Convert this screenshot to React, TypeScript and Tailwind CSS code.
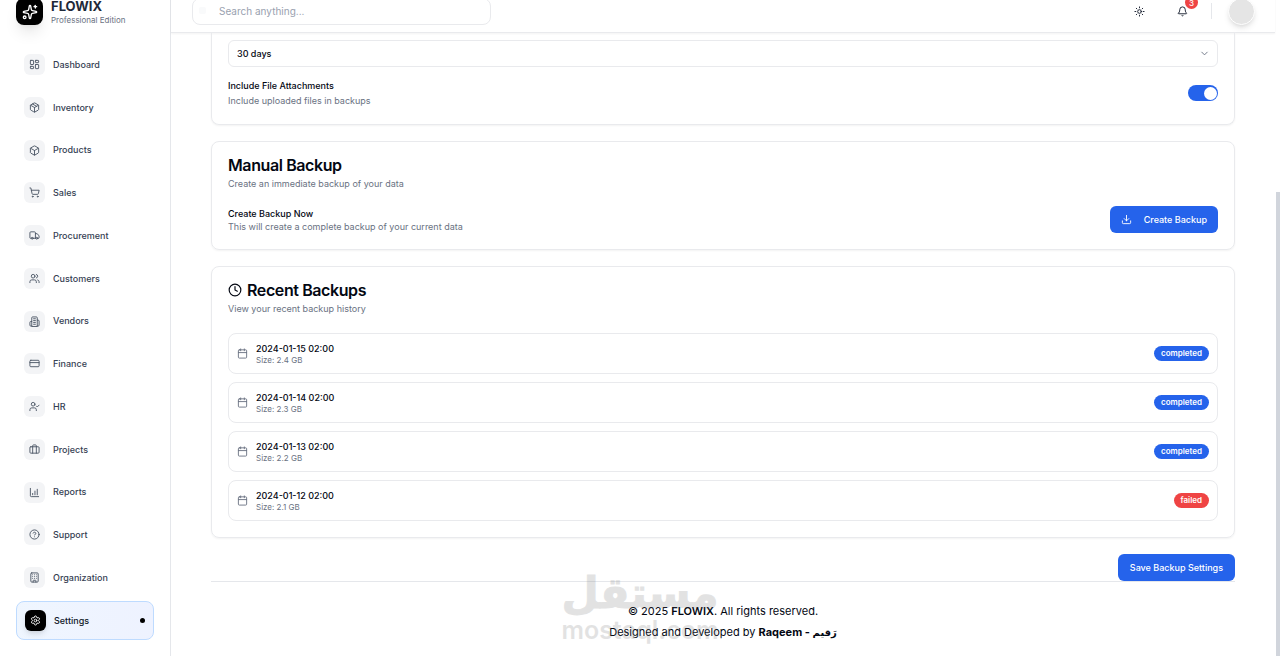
import React from "react";
import {
  Bell,
  Box,
  Building,
  Calendar,
  ChevronDown,
  CircleQuestionMark,
  Clock,
  CreditCard,
  LayoutDashboard,
  Package,
  Settings,
  ShoppingCart,
  Sparkles,
  Sun,
  Truck,
  UserCheck,
  Users,
  type LucideIcon,
} from "lucide-react";

function ReportIcon({ className }: { className?: string }) {
  return (
    <svg className={className} viewBox="0 0 24 24" fill="none" stroke="currentColor" strokeWidth="2" strokeLinecap="round" strokeLinejoin="round">
      <path d="M3 3v16a2 2 0 0 0 2 2h16" />
      <path d="M8 17v-3M13 17V9M18 17V5" />
    </svg>
  );
}

function VendorIcon({ className }: { className?: string }) {
  return (
    <svg className={className} viewBox="0 0 24 24" fill="none" stroke="currentColor" strokeWidth="2" strokeLinecap="round" strokeLinejoin="round">
      <path d="M6 22V4a2 2 0 0 1 2-2h8a2 2 0 0 1 2 2v18Z" />
      <path d="M6 12H4a2 2 0 0 0-2 2v6a2 2 0 0 0 2 2h2" />
      <path d="M18 9h2a2 2 0 0 1 2 2v9a2 2 0 0 1-2 2h-2" />
      <path d="M10 6h4M10 10h4M10 14h4M10 18h4" />
    </svg>
  );
}

function ProjectIcon({ className }: { className?: string }) {
  return (
    <svg className={className} viewBox="0 0 24 24" fill="none" stroke="currentColor" strokeWidth="2" strokeLinecap="round" strokeLinejoin="round">
      <path d="M16 20V4a2 2 0 0 0-2-2h-4a2 2 0 0 0-2 2v16" />
      <rect width="20" height="14" x="2" y="6" rx="2" />
    </svg>
  );
}

function BackupIcon({ className }: { className?: string }) {
  return (
    <svg className={className} viewBox="0 0 24 24" fill="none" stroke="currentColor" strokeWidth="2" strokeLinecap="round" strokeLinejoin="round">
      <path d="M21 15v4a2 2 0 0 1-2 2H5a2 2 0 0 1-2-2v-4" />
      <path d="M7 10l5 5 5-5M12 15V3" />
    </svg>
  );
}

type IconType = LucideIcon | ((p: { className?: string }) => React.ReactElement);

const navItems: { label: string; icon: IconType }[] = [
  { label: "Dashboard", icon: LayoutDashboard },
  { label: "Inventory", icon: Package },
  { label: "Products", icon: Box },
  { label: "Sales", icon: ShoppingCart },
  { label: "Procurement", icon: Truck },
  { label: "Customers", icon: Users },
  { label: "Vendors", icon: VendorIcon },
  { label: "Finance", icon: CreditCard },
  { label: "HR", icon: UserCheck },
  { label: "Projects", icon: ProjectIcon },
  { label: "Reports", icon: ReportIcon },
  { label: "Support", icon: CircleQuestionMark },
  { label: "Organization", icon: Building },
];

const backups = [
  { date: "2024-01-15 02:00", size: "2.4 GB", status: "completed" },
  { date: "2024-01-14 02:00", size: "2.3 GB", status: "completed" },
  { date: "2024-01-13 02:00", size: "2.2 GB", status: "completed" },
  { date: "2024-01-12 02:00", size: "2.1 GB", status: "failed" },
];

function Sidebar() {
  return (
    <aside className="flex w-[171px] shrink-0 flex-col border-r border-gray-200 px-4 pb-4">
      <div className="-mt-[2px] flex h-[27px] shrink-0 items-center gap-2">
        <div className="flex size-[27px] shrink-0 items-center justify-center rounded-lg bg-black text-white shadow-lg">
          <Sparkles className="size-4" />
        </div>
        <div>
          <div className="text-[13px] leading-4 font-bold text-gray-800">FLOWIX</div>
          <div className="text-[8px] leading-3 text-gray-500">Professional Edition</div>
        </div>
      </div>
      <nav aria-label="Main" className="mt-5 flex flex-1 flex-col justify-between">
        {navItems.map(({ label, icon: Icon }) => (
          <a key={label} href="#" className="flex h-[39px] items-center gap-2 px-2 text-[9px] font-medium text-gray-700">
            <span className="flex size-[21px] items-center justify-center rounded-md bg-gray-100 text-gray-600">
              <Icon className="size-[11px]" />
            </span>
            {label}
          </a>
        ))}
        <a
          href="#"
          aria-current="page"
          className="flex h-[39px] items-center gap-2 rounded-lg border border-blue-200 bg-linear-to-r from-blue-50 to-indigo-50 px-2 text-[9px] font-medium text-gray-900"
        >
          <span className="flex size-[21px] items-center justify-center rounded-md bg-black text-white shadow-md">
            <Settings className="size-[11px]" />
          </span>
          <span className="flex-1">Settings</span>
          <span className="size-[5px] rounded-full bg-black" />
        </a>
      </nav>
    </aside>
  );
}

function Header() {
  return (
    <header className="-mt-[10px] flex h-[43px] shrink-0 items-center justify-between border-b border-[#e9eaed] pr-5 pl-[21px] shadow-xs">
      <div className="relative">
        <input
          type="search"
          aria-label="Search"
          placeholder="Search anything..."
          className="h-[27px] w-[299px] rounded-lg border border-[#e9eaed] bg-white pr-3 pl-[26px] text-[10px] text-gray-900 placeholder:text-gray-400"
        />
        <span className="absolute top-[10px] left-[7px] size-[7px] rounded-xs bg-gray-50" />
      </div>
      <div className="flex items-center">
        <button type="button" aria-label="Toggle theme" className="flex size-6 items-center justify-center text-gray-900">
          <Sun className="size-[11px]" />
        </button>
        <button type="button" aria-label="Notifications" className="relative ml-[19px] flex size-6 items-center justify-center text-gray-900">
          <Bell className="size-[11px]" />
          <span className="absolute -top-[3px] -right-1 flex size-[13px] items-center justify-center rounded-full bg-[#ef4444] text-[8px] font-medium text-white">3</span>
        </button>
        <span className="ml-[17px] h-4 w-px bg-gray-200" />
        <button type="button" aria-label="Account" className="ml-4 size-[27px] rounded-full border border-white bg-neutral-200 shadow-md" />
      </div>
    </header>
  );
}

function CardTitle({ title, text, icon }: { title: string; text: string; icon?: React.ReactNode }) {
  return (
    <div>
      <h2 className="flex items-center gap-[5px] text-[16px] leading-4 font-semibold tracking-tight text-gray-950">
        {icon}
        {title}
      </h2>
      <p className="mt-1 text-[9px] leading-[14px] text-gray-500">{text}</p>
    </div>
  );
}

export default function App() {
  return (
    <div className="relative flex h-screen overflow-hidden bg-white font-['Inter','DejaVu_Sans',sans-serif] text-gray-950">
      <Sidebar />
      <div className="mr-[5px] flex min-w-0 flex-1 flex-col">
        <Header />
        <main className="flex flex-col px-10">
          <section className="rounded-b-lg border-x border-b border-[#e9eaed] px-4 pt-[7px] pb-4 shadow-xs">
            <div className="relative">
              <select aria-label="Retention period" defaultValue="30" className="block h-[27px] w-full appearance-none rounded-md border border-[#e9eaed] bg-white px-2 text-[9px] font-medium">
                <option value="30">30 days</option>
                <option value="60">60 days</option>
              </select>
              <ChevronDown className="pointer-events-none absolute top-2 right-2 size-[11px] text-gray-500" />
            </div>
            <div className="mt-[11px] flex items-center justify-between">
              <label htmlFor="attachments" className="text-[9px] leading-[15px] font-medium">
                Include File Attachments
                <span className="block font-normal text-gray-500">Include uploaded files in backups</span>
              </label>
              <input
                id="attachments"
                type="checkbox"
                role="switch"
                defaultChecked
                className="flex h-4 w-[30px] appearance-none items-center rounded-full bg-gray-300 px-px before:size-[13px] before:rounded-full before:bg-white checked:justify-end checked:bg-[#2563eb]"
              />
            </div>
          </section>

          <section className="mt-4 rounded-lg border border-[#e9eaed] px-4 pt-[15px] pb-4 shadow-xs">
            <CardTitle title="Manual Backup" text="Create an immediate backup of your data" />
            <div className="mt-[15px] flex items-center justify-between">
              <div className="text-[9px] leading-[13px]">
                <h3 className="font-medium">Create Backup Now</h3>
                <p className="text-gray-500">This will create a complete backup of your current data</p>
              </div>
              <button type="button" className="flex h-[27px] items-center gap-3 rounded-md bg-[#2563eb] px-[11px] text-[9px] font-medium text-white">
                <BackupIcon className="size-[11px]" />
                Create Backup
              </button>
            </div>
          </section>

          <section className="mt-4 rounded-lg border border-[#e9eaed] px-4 pt-[15px] pb-4 shadow-xs">
            <CardTitle title="Recent Backups" text="View your recent backup history" icon={<Clock className="size-[14px]" />} />
            <ul className="mt-[17px] flex flex-col gap-2">
              {backups.map((b) => (
                <li key={b.date} className="flex h-[41px] items-center gap-2 rounded-lg border border-[#e9eaed] px-2">
                  <Calendar className="size-[11px] text-gray-500" />
                  <div className="flex-1">
                    <div className="text-[9px] leading-[13px] font-medium">{b.date}</div>
                    <div className="text-[8px] leading-[11px] text-gray-500">Size: {b.size}</div>
                  </div>
                  <span
                    className={
                      b.status === "failed"
                        ? "rounded-full bg-[#ef4444] px-[7px] text-[8px] leading-[15px] font-semibold text-white"
                        : "rounded-full bg-[#2563eb] px-[7px] text-[8px] leading-[15px] font-semibold text-white"
                    }
                  >
                    {b.status}
                  </span>
                </li>
              ))}
            </ul>
          </section>

          <button type="button" className="mt-4 h-[27px] self-end rounded-md bg-[#2563eb] px-3 text-[9px] font-medium text-white">
            Save Backup Settings
          </button>
        </main>
        <footer className="relative mx-10 border-t border-gray-200 pt-[19px] text-center text-[11px] leading-[21px]">
          <p>
            © 2025 <strong className="font-semibold">FLOWIX</strong>. All rights reserved.
          </p>
          <p>
            Designed and Developed by{" "}
            <strong className="font-bold">
              Raqeem - <span lang="ar" className="text-[10px]">رَقيم</span>
            </strong>
          </p>
          <div className="pointer-events-none absolute -top-3 left-[351px] flex w-[156px] flex-col items-center font-semibold text-neutral-500 opacity-20">
            <div lang="ar" dir="rtl" className="font-['DejaVu_Sans',sans-serif] text-[43px] leading-[46px] font-bold [-webkit-text-stroke:1px_currentColor]">مستقل</div>
            <div className="text-[25px] leading-[28px]">mostaql.com</div>
          </div>
        </footer>
      </div>
      <div className="absolute top-48 right-0 bottom-0 w-1 bg-gray-300" />
    </div>
  );
}
